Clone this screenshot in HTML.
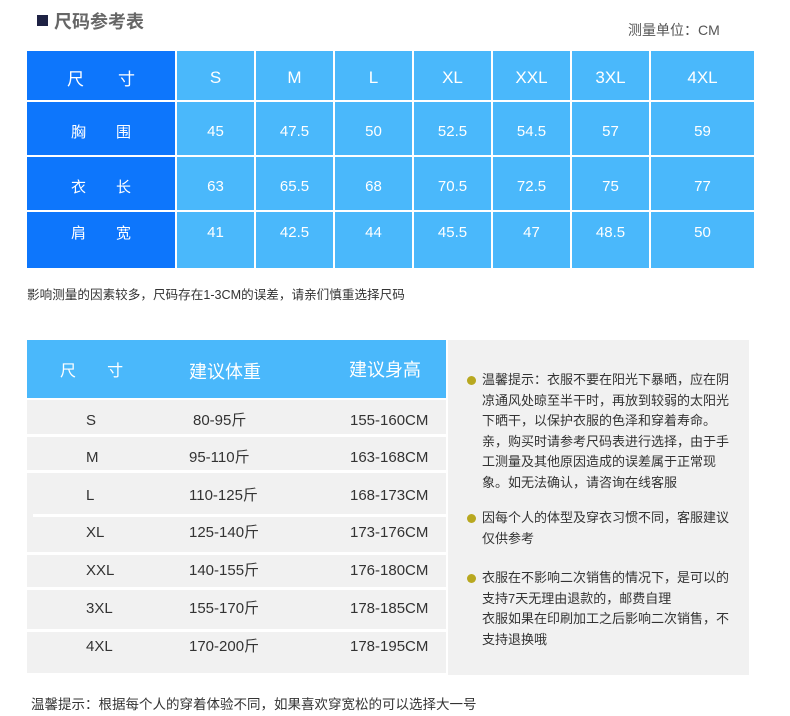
<!DOCTYPE html>
<html><head><meta charset="utf-8"><style>
body{margin:0;width:790px;height:716px;background:#fff;position:relative;overflow:hidden;font-family:"Liberation Sans","Noto Sans CJK SC",sans-serif}
.a{position:absolute}
.c{position:absolute;display:flex;align-items:center;justify-content:center;color:#fff;font-size:16px}
.t{position:absolute;color:#333;font-size:15px;line-height:20px}
.w{position:absolute;background:#fff;height:3px}
.n{position:absolute;font-size:13px;color:#333;line-height:20.5px;width:252px}
.dot{position:absolute;width:9px;height:9px;border-radius:50%;background:#b8a820}
</style></head><body>
<div class="a" style="left:37px;top:15px;width:11px;height:11px;background:#1e2244"></div>
<div class="a" style="left:54px;top:8px;font-size:18px;font-weight:bold;color:#666">尺码参考表</div>
<div class="a" style="left:628px;top:20px;font-size:14px;color:#555">测量单位：CM</div>

<div class="a" style="left:27px;top:51px;width:727px;height:217px;background:#fff"></div>
<div id="tt"></div>
<div class="a" style="left:27px;top:284px;font-size:12.6px;color:#333">影响测量的因素较多，尺码存在1-3CM的误差，请亲们慎重选择尺码</div>

<div class="a" style="left:27px;top:340px;width:419px;height:58px;background:#4ab8fb"></div>
<div class="c" style="left:60px;top:340px;width:80px;height:58px;font-size:16px;justify-content:flex-start">尺&nbsp;&nbsp;&nbsp;&nbsp;&nbsp;&nbsp;&nbsp;寸</div>
<div class="c" style="left:170px;top:340px;width:110px;height:62px;font-size:18px">建议体重</div>
<div class="c" style="left:330px;top:340px;width:110px;height:58px;font-size:18px">建议身高</div>
<div class="a" style="left:27px;top:400px;width:419px;height:273px;background:#f1f1f1"></div>
<div class="w" style="left:27px;top:434px;width:419px"></div>
<div class="w" style="left:27px;top:470px;width:419px"></div>
<div class="w" style="left:33px;top:514px;width:415px"></div>
<div class="w" style="left:27px;top:552px;width:419px"></div>
<div class="w" style="left:27px;top:587px;width:419px"></div>
<div class="w" style="left:27px;top:629px;width:419px"></div>
<div class="a" style="left:448px;top:340px;width:301px;height:335px;background:#f1f1f1"></div>

<div id="bt"></div>

<div class="dot" style="left:467px;top:376px"></div>
<div class="n" style="left:482px;top:370px">温馨提示：衣服不要在阳光下暴晒，应在阴凉通风处晾至半干时，再放到较弱的太阳光下晒干，以保护衣服的色泽和穿着寿命。亲，购买时请参考尺码表进行选择，由于手工测量及其他原因造成的误差属于正常现象。如无法确认，请咨询在线客服</div>
<div class="dot" style="left:467px;top:514px"></div>
<div class="n" style="left:482px;top:508px">因每个人的体型及穿衣习惯不同，客服建议仅供参考</div>
<div class="dot" style="left:467px;top:574px"></div>
<div class="n" style="left:482px;top:568px">衣服在不影响二次销售的情况下，是可以的支持7天无理由退款的，邮费自理<br>衣服如果在印刷加工之后影响二次销售，不支持退换哦</div>

<div class="a" style="left:31px;top:693px;font-size:13.5px;color:#333">温馨提示：根据每个人的穿着体验不同，如果喜欢穿宽松的可以选择大一号</div>
<script>
var cx=[[27,148],[177,77],[256,77],[335,77],[414,77],[493,77],[572,77],[651,103]];
var ry=[[51,49],[102,53],[157,53],[212,56]];
var d=[["尺　　寸","S","M","L","XL","XXL","3XL","4XL"],["胸　　围","45","47.5","50","52.5","54.5","57","59"],["衣　　长","63","65.5","68","70.5","72.5","75","77"],["肩　　宽","41","42.5","44","45.5","47","48.5","50"]];
var h="";
for(var r=0;r<4;r++)for(var c=0;c<8;c++){h+='<div class="c" style="left:'+cx[c][0]+'px;top:'+(ry[r][0]+(r==0?2:(r==3?-8:3)))+'px;width:'+cx[c][1]+'px;height:'+ry[r][1]+'px;font-size:'+(r==0?17:15)+'px;z-index:2">'+d[r][c]+'</div><div class="a" style="left:'+cx[c][0]+'px;top:'+ry[r][0]+'px;width:'+cx[c][1]+'px;height:'+ry[r][1]+'px;background:'+(c==0?'#0d76fc':'#4ab8fb')+'"></div>';}
document.getElementById('tt').outerHTML=h;
var b=[["S","80-95斤","155-160CM"],["M","95-110斤","163-168CM"],["L","110-125斤","168-173CM"],["XL","125-140斤","173-176CM"],["XXL","140-155斤","176-180CM"],["3XL","155-170斤","178-185CM"],["4XL","170-200斤","178-195CM"]];
var ys=[421,458,496,533,571,609,647];h="";
for(var i=0;i<7;i++){h+='<div class="t" style="left:86px;top:'+(ys[i]-10)+'px">'+b[i][0]+'</div><div class="t" style="left:'+(i==0?193:189)+'px;top:'+(ys[i]-10)+'px">'+b[i][1]+'</div><div class="t" style="left:350px;top:'+(ys[i]-10)+'px">'+b[i][2]+'</div>';}
document.getElementById('bt').outerHTML=h;
</script>
</body></html>
